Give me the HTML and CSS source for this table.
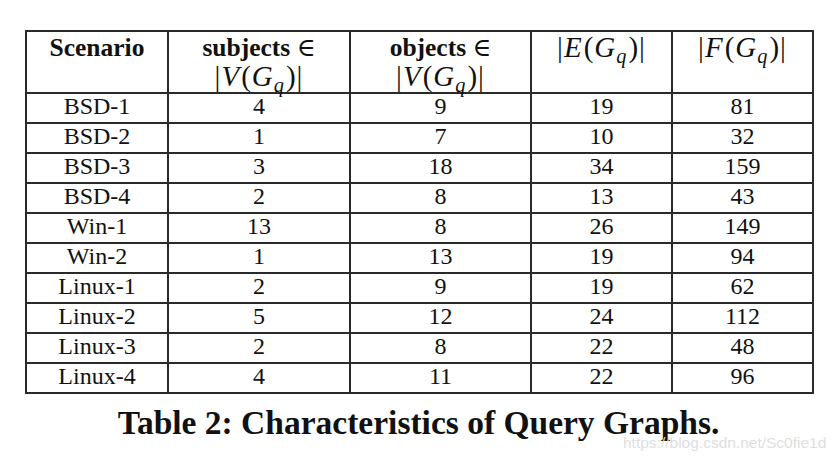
FILE: index.html
```html
<!DOCTYPE html>
<html lang="en">
<head>
    <meta charset="UTF-8">
    <title>Table 2: Characteristics of Query Graphs</title>
    <link rel="stylesheet" href="styles.css">
</head>
<body>
    <div class="figure">
        <table class="qg">
            <thead>
                <tr>
                    <th class="c1">Scenario</th>
                    <th class="c2">subjects <span class="op">&isin;</span><br><span class="m">|<i>V</i>(<i>G<sub>q</sub></i>)|</span></th>
                    <th class="c3">objects <span class="op">&isin;</span><br><span class="m">|<i>V</i>(<i>G<sub>q</sub></i>)|</span></th>
                    <th class="c4"><span class="m">|<i>E</i>(<i>G<sub>q</sub></i>)|</span></th>
                    <th class="c5"><span class="m">|<i>F</i>(<i>G<sub>q</sub></i>)|</span></th>
                </tr>
            </thead>
            <tbody>
                <tr><td>BSD-1</td><td>4</td><td>9</td><td>19</td><td>81</td></tr>
                <tr><td>BSD-2</td><td>1</td><td>7</td><td>10</td><td>32</td></tr>
                <tr><td>BSD-3</td><td>3</td><td>18</td><td>34</td><td>159</td></tr>
                <tr><td>BSD-4</td><td>2</td><td>8</td><td>13</td><td>43</td></tr>
                <tr><td>Win-1</td><td>13</td><td>8</td><td>26</td><td>149</td></tr>
                <tr><td>Win-2</td><td>1</td><td>13</td><td>19</td><td>94</td></tr>
                <tr><td>Linux-1</td><td>2</td><td>9</td><td>19</td><td>62</td></tr>
                <tr><td>Linux-2</td><td>5</td><td>12</td><td>24</td><td>112</td></tr>
                <tr><td>Linux-3</td><td>2</td><td>8</td><td>22</td><td>48</td></tr>
                <tr><td>Linux-4</td><td>4</td><td>11</td><td>22</td><td>96</td></tr>
            </tbody>
        </table>
        <p class="caption">Table 2: Characteristics of Query Graphs.</p>
        <span class="watermark">https://blog.csdn.net/Sc0fie1d</span>
    </div>
</body>
</html>
```

FILE: styles.css
```css
body {
    margin: 0;
    padding: 0;
    background-color: #fff;
    font-family: "Liberation Serif", "DejaVu Serif", serif;
    color: #111;
}

.figure {
    position: relative;
    width: 839px;
    height: 461px;
    padding-top: 30px;
    box-sizing: border-box;
}

.qg {
    border-collapse: collapse;
    margin-left: 25px;
    font-size: 24px;
    border: 2px solid #2a2a2a;
}

.qg th,
.qg td {
    border: 2px solid #2a2a2a;
    text-align: center;
    padding: 0;
}

.qg th {
    height: 57px;
    vertical-align: top;
    line-height: 29px;
    padding-top: 1px;
    font-size: 25.5px;
    font-weight: bold;
}

.qg td {
    height: 28px;
    line-height: 24px;
    vertical-align: top;
}

.c1 { width: 140px; }
.c2 { width: 180px; }
.c3 { width: 179px; }
.c4 { width: 139px; }
.c5 { width: 139px; }

.op,
.m {
    font-weight: normal;
}

.m {
    font-size: 29px;
    letter-spacing: 1px;
}

.m i {
    padding-right: 1px;
}

.m sub {
    font-size: 0.7em;
    vertical-align: -0.3em;
    line-height: 0;
}

.caption {
    margin: 10px 0 0 25px;
    width: 787px;
    text-align: center;
    font-size: 33.5px;
    font-weight: bold;
}

.watermark {
    position: absolute;
    left: 623px;
    top: 434px;
    font-family: "Liberation Sans", Arial, sans-serif;
    font-size: 15.5px;
    color: #dedede;
}
```
